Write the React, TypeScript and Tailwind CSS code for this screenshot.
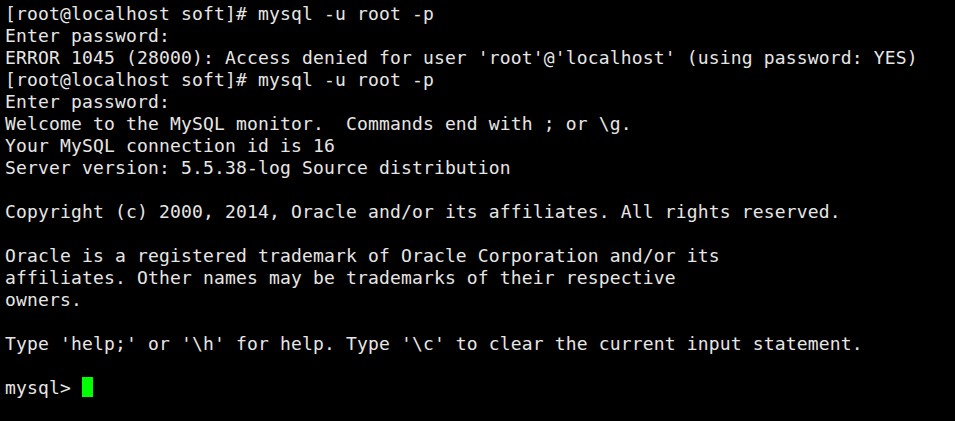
const lines = [
  "[root@localhost soft]# mysql -u root -p",
  "Enter password:",
  "ERROR 1045 (28000): Access denied for user 'root'@'localhost' (using password: YES)",
  "[root@localhost soft]# mysql -u root -p",
  "Enter password:",
  "Welcome to the MySQL monitor.  Commands end with ; or \\g.",
  "Your MySQL connection id is 16",
  "Server version: 5.5.38-log Source distribution",
  "",
  "Copyright (c) 2000, 2014, Oracle and/or its affiliates. All rights reserved.",
  "",
  "Oracle is a registered trademark of Oracle Corporation and/or its",
  "affiliates. Other names may be trademarks of their respective",
  "owners.",
  "",
  "Type 'help;' or '\\h' for help. Type '\\c' to clear the current input statement.",
  "",
];

export default function App() {
  return (
    <div className="h-[421px] w-[955px] overflow-hidden bg-black pl-[5px] pt-[3px] font-['DejaVu_Sans_Mono',monospace] text-[18px] leading-[22px] tracking-[0.16px] text-[#e6e6e6]">
      {lines.map((l, i) => (
        <div key={i} className="h-[22px] whitespace-pre">
          {l}
        </div>
      ))}
      <div className="flex h-[22px] items-start whitespace-pre">
        <span>mysql&gt; </span>
        <span className="inline-block h-[20px] w-[11px] bg-[#00ff00]" />
      </div>
    </div>
  );
}
